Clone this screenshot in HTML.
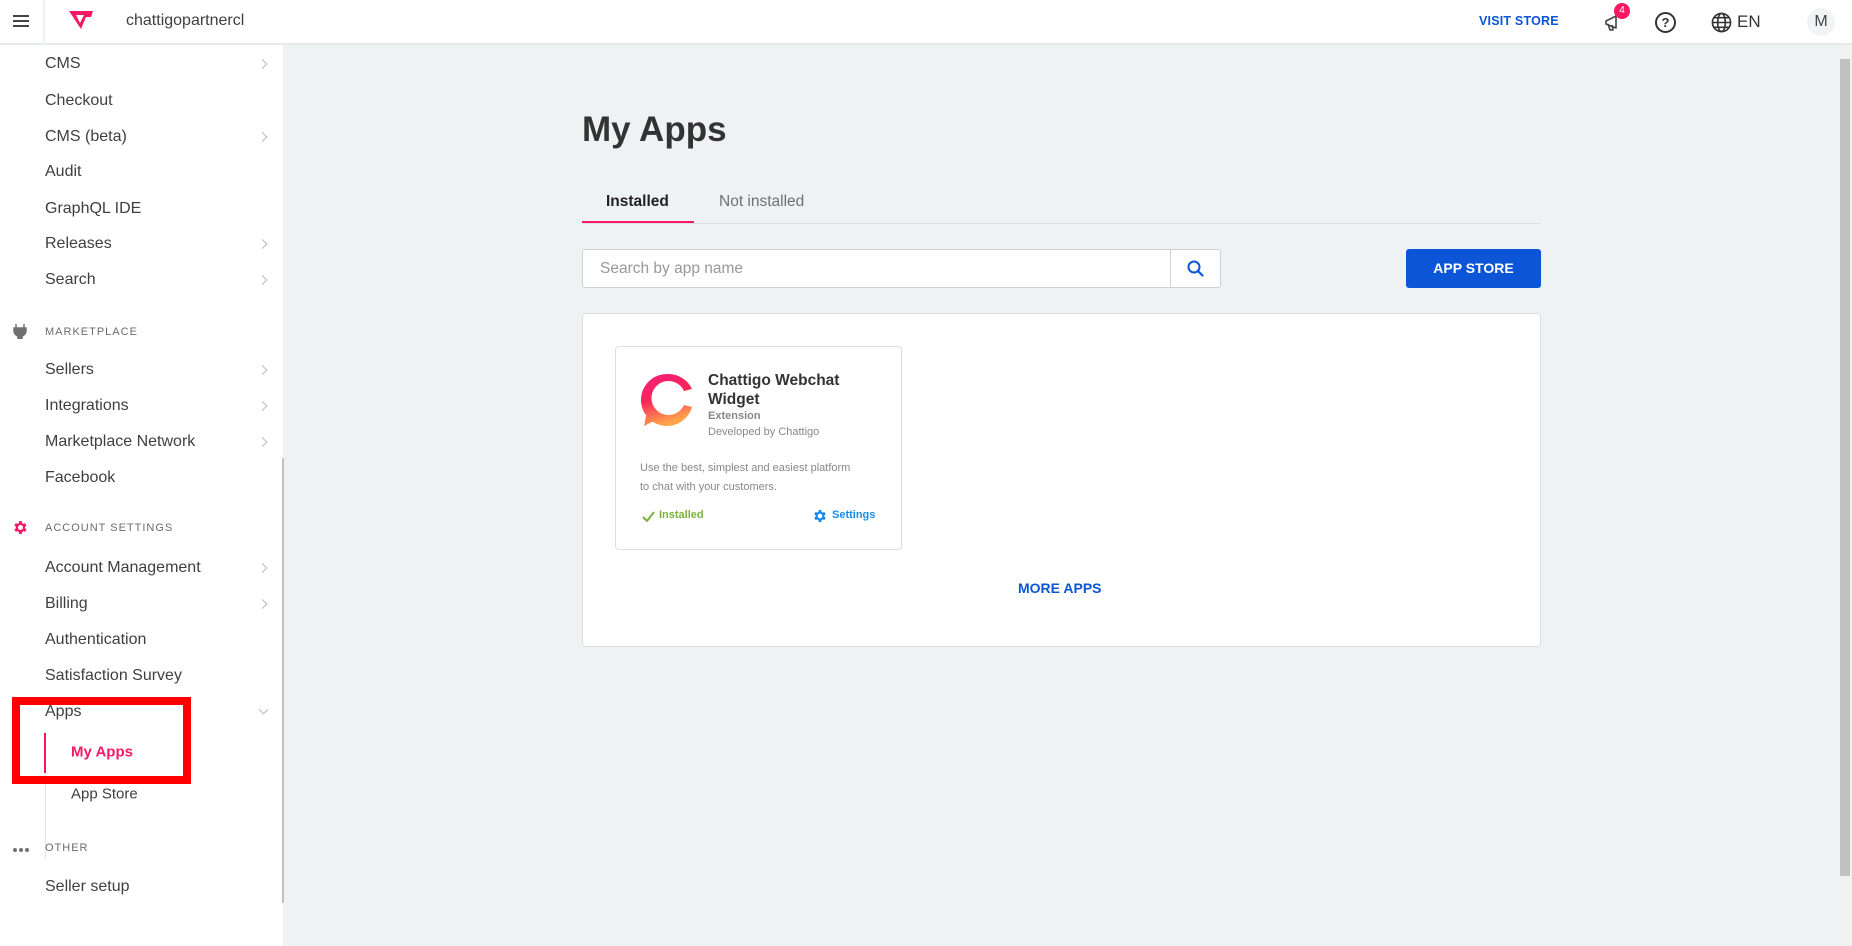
<!DOCTYPE html>
<html><head><meta charset="utf-8"><style>
*{box-sizing:border-box;margin:0;padding:0}
body{width:1852px;height:946px;overflow:hidden;background:#eff2f3;font-family:"Liberation Sans",sans-serif;color:#3f3f40;position:relative}
.hdr{position:absolute;left:0;top:0;width:1852px;height:45px;background:#fff;border-bottom:2px solid #e7eaeb}
.side{position:absolute;left:0;top:45px;width:283px;height:901px;background:#fff}
.it{position:absolute;left:45px;font-size:16px;color:#3f3f40;transform:translateY(-50%)}
.sec{position:absolute;left:45px;font-size:11px;letter-spacing:1px;color:#6b6b6b;transform:translateY(-50%)}
.chev{position:absolute;left:259px;width:7px;height:7px;border-right:1.5px solid #b8b8b8;border-top:1.5px solid #b8b8b8;transform:translateY(-50%) rotate(45deg)}
.abs{position:absolute}
</style></head><body>
<div class="hdr">
  <div class="abs" style="left:13px;top:15px;width:16px;height:2px;background:#444;box-shadow:0 5px 0 #444,0 10px 0 #444"></div>
  <div class="abs" style="left:43px;top:0;width:2px;height:45px;background:#eef0f1"></div>
  <svg class="abs" style="left:68px;top:10px" width="26" height="20" viewBox="0 0 26 20"><path d="M1 1h24l-2 6h-5l-5 12z M7 5l4 0 2 6z" fill="#f71963"/><path d="M8 5h8l-4 8z" fill="#fff"/></svg>
  <div class="abs" style="left:126px;top:12px;font-size:16px;color:#3f3f40">chattigopartnercl</div>
  <div class="abs" style="left:1479px;top:14px;font-size:12.5px;font-weight:bold;color:#0b55d6;letter-spacing:.2px">VISIT STORE</div>
  <svg class="abs" style="left:1603px;top:13px" width="22" height="20" viewBox="0 0 22 20"><path d="M3 8l10-5v12L3 11z M5 11l2 6h3l-1-5" fill="none" stroke="#444" stroke-width="1.6" stroke-linejoin="round"/></svg>
  <div class="abs" style="left:1614px;top:3px;width:16px;height:16px;border-radius:50%;background:#f71963;color:#fff;font-size:10px;text-align:center;line-height:16px">4</div>
  <div class="abs" style="left:1655px;top:12px;width:21px;height:21px;border:2px solid #333;border-radius:50%;font-size:13px;font-weight:bold;text-align:center;line-height:17px;color:#333">?</div>
  <svg class="abs" style="left:1711px;top:12px" width="21" height="21" viewBox="0 0 22 22"><g fill="none" stroke="#333" stroke-width="1.7"><circle cx="11" cy="11" r="9.5"/><ellipse cx="11" cy="11" rx="4" ry="9.5"/><path d="M1.5 11h19M3 6h16M3 16h16"/></g></svg>
  <div class="abs" style="left:1737px;top:12px;font-size:17px;color:#333">EN</div>
  <div class="abs" style="left:1807px;top:8px;width:28px;height:28px;border-radius:50%;background:#f1f3f4;font-size:16px;text-align:center;line-height:28px;color:#444">M</div>
</div>
<div class="side"></div>
<div class="abs" style="left:0;top:45px;width:283px;height:901px">
<div class="it" style="top:19px">CMS</div><div class="chev" style="top:19px"></div>
<div class="it" style="top:56px">Checkout</div>
<div class="it" style="top:92px">CMS (beta)</div><div class="chev" style="top:92px"></div>
<div class="it" style="top:127px">Audit</div>
<div class="it" style="top:164px">GraphQL IDE</div>
<div class="it" style="top:199px">Releases</div><div class="chev" style="top:199px"></div>
<div class="it" style="top:235px">Search</div><div class="chev" style="top:235px"></div>
<svg class="abs" style="left:12px;top:278px" width="16" height="16" viewBox="0 0 16 16"><path d="M4 1v4M12 1v4M2 5h12v3a6 6 0 0 1-4 5v3H6v-3a6 6 0 0 1-4-5z" fill="#707070" stroke="#707070" stroke-width="1.5"/></svg>
<div class="sec" style="top:287px">MARKETPLACE</div>
<div class="it" style="top:325px">Sellers</div><div class="chev" style="top:325px"></div>
<div class="it" style="top:361px">Integrations</div><div class="chev" style="top:361px"></div>
<div class="it" style="top:397px">Marketplace Network</div><div class="chev" style="top:397px"></div>
<div class="it" style="top:433px">Facebook</div>
<svg class="abs" style="left:12px;top:474px" width="17" height="17" viewBox="0 0 24 24"><path fill="#f71963" d="M19.4 13a7.5 7.5 0 0 0 0-2l2.1-1.6-2-3.5-2.5 1a7.3 7.3 0 0 0-1.7-1L15 3h-4l-.4 2.9a7.3 7.3 0 0 0-1.7 1l-2.5-1-2 3.5L6.5 11a7.5 7.5 0 0 0 0 2l-2.1 1.6 2 3.5 2.5-1a7.3 7.3 0 0 0 1.7 1L11 21h4l.4-2.9a7.3 7.3 0 0 0 1.7-1l2.5 1 2-3.5zM13 15.5a3.5 3.5 0 1 1 0-7 3.5 3.5 0 0 1 0 7z" transform="translate(-1 0)"/></svg>
<div class="sec" style="top:483px">ACCOUNT SETTINGS</div>
<div class="it" style="top:523px">Account Management</div><div class="chev" style="top:523px"></div>
<div class="it" style="top:559px">Billing</div><div class="chev" style="top:559px"></div>
<div class="it" style="top:595px">Authentication</div>
<div class="it" style="top:631px">Satisfaction Survey</div>
<div class="it" style="top:667px">Apps</div>
<div class="abs" style="left:260px;top:661px;width:7px;height:7px;border-right:1.5px solid #b8b8b8;border-bottom:1.5px solid #b8b8b8;transform:rotate(45deg)"></div>
<div class="abs" style="left:45px;top:686px;width:1px;height:128px;background:#e3e3e3"></div>
<div class="abs" style="left:44px;top:688px;width:2px;height:40px;background:#f71963"></div>
<div class="it" style="top:707px;left:71px;color:#f71963;font-weight:bold;font-size:15px">My Apps</div>
<div class="it" style="top:749px;left:71px;font-size:15px">App Store</div>
<div class="abs" style="left:13px;top:803px;width:4px;height:4px;border-radius:50%;background:#707070;box-shadow:6px 0 0 #707070,12px 0 0 #707070"></div>
<div class="sec" style="top:803px">OTHER</div>
<div class="it" style="top:842px">Seller setup</div>
<div class="abs" style="left:12px;top:652px;width:179px;height:87px;border:8px solid #ff0000"></div>
<div class="abs" style="left:282px;top:413px;width:2px;height:445px;background:#c1c1c1"></div>
</div>
<div class="abs" style="left:582px;top:110px;font-size:35px;font-weight:bold;color:#333">My Apps</div>
<div class="abs" style="left:606px;top:193px;font-size:15.5px;font-weight:bold;color:#222">Installed</div>
<div class="abs" style="left:719px;top:193px;font-size:15.5px;color:#707070">Not installed</div>
<div class="abs" style="left:582px;top:223px;width:959px;height:1px;background:#dcdfe0"></div>
<div class="abs" style="left:582px;top:221px;width:112px;height:2px;background:#f71963"></div>
<div class="abs" style="left:582px;top:249px;width:639px;height:39px;background:#fff;border:1px solid #ccd1d4;border-radius:3px"></div>
<div class="abs" style="left:600px;top:260px;font-size:15.5px;color:#979899">Search by app name</div>
<div class="abs" style="left:1170px;top:249px;width:1px;height:39px;background:#ccd1d4"></div>
<svg class="abs" style="left:1187px;top:260px" width="17" height="17" viewBox="0 0 17 17"><circle cx="7" cy="7" r="5.5" fill="none" stroke="#0b55d6" stroke-width="2"/><path d="M11 11l4.5 4.5" stroke="#0b55d6" stroke-width="2.2" stroke-linecap="round"/></svg>
<div class="abs" style="left:1406px;top:249px;width:135px;height:39px;background:#0b55d6;border-radius:3px;color:#fff;font-size:14px;font-weight:bold;text-align:center;line-height:39px">APP STORE</div>
<div class="abs" style="left:582px;top:313px;width:959px;height:334px;background:#fff;border:1px solid #dcdfe0;border-radius:4px"></div>
<div class="abs" style="left:615px;top:346px;width:287px;height:204px;background:#fff;border:1px solid #dcdfe0;border-radius:4px"></div>
<svg class="abs" style="left:640px;top:372px" width="56" height="55" viewBox="0 0 56 55"><defs><linearGradient id="g" x1="0" y1="0" x2="0.3" y2="1"><stop offset="0" stop-color="#f2217a"/><stop offset=".5" stop-color="#f8245a"/><stop offset="1" stop-color="#ffa34a"/></linearGradient></defs><path d="M28 2A26 26 0 1 0 52 35L44 33A17 17 0 1 1 44 19L52 17A26 26 0 0 0 28 2Z M6 44L4 54L16 48Z" fill="url(#g)"/></svg>
<div class="abs" style="left:708px;top:371px;font-size:15.5px;font-weight:bold;color:#333;line-height:19px">Chattigo Webchat<br>Widget</div>
<div class="abs" style="left:708px;top:410px;font-size:11px;font-weight:bold;color:#888">Extension</div>
<div class="abs" style="left:708px;top:426px;font-size:11px;color:#888">Developed by Chattigo</div>
<div class="abs" style="left:640px;top:459px;font-size:11px;color:#888;line-height:19px">Use the best, simplest and easiest platform<br>to chat with your customers.</div>
<svg class="abs" style="left:642px;top:511px" width="13" height="11" viewBox="0 0 13 11"><path d="M1 6l4 4 7-9" fill="none" stroke="#79b03f" stroke-width="2"/></svg>
<div class="abs" style="left:659px;top:509px;font-size:11px;font-weight:bold;color:#79b03f">Installed</div>
<svg class="abs" style="left:812px;top:508px" width="16" height="16" viewBox="0 0 24 24"><path fill="#1a8ae8" d="M19.4 13a7.5 7.5 0 0 0 0-2l2.1-1.6-2-3.5-2.5 1a7.3 7.3 0 0 0-1.7-1L15 3h-4l-.4 2.9a7.3 7.3 0 0 0-1.7 1l-2.5-1-2 3.5L6.5 11a7.5 7.5 0 0 0 0 2l-2.1 1.6 2 3.5 2.5-1a7.3 7.3 0 0 0 1.7 1L11 21h4l.4-2.9a7.3 7.3 0 0 0 1.7-1l2.5 1 2-3.5zM13 15.5a3.5 3.5 0 1 1 0-7 3.5 3.5 0 0 1 0 7z" transform="translate(-1 0)"/></svg>
<div class="abs" style="left:832px;top:509px;font-size:11px;font-weight:bold;color:#1a8ae8">Settings</div>
<div class="abs" style="left:1018px;top:580px;font-size:14px;font-weight:bold;color:#0b55d6">MORE APPS</div>
<div class="abs" style="left:1838px;top:45px;width:14px;height:901px;background:#f1f1f1"></div>
<div class="abs" style="left:1840px;top:59px;width:10px;height:817px;background:#c1c1c1"></div>
</body></html>
